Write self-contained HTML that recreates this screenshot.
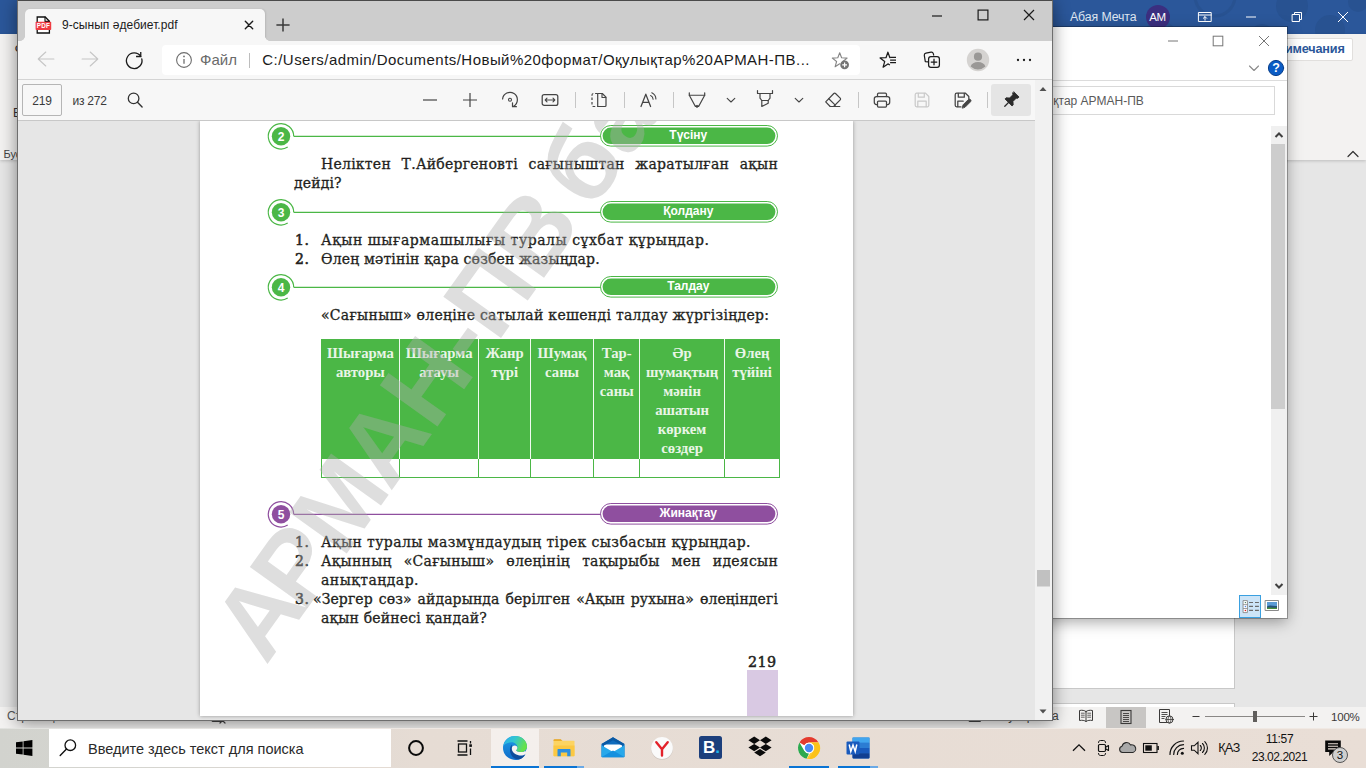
<!DOCTYPE html>
<html lang="kk">
<head>
<meta charset="utf-8">
<title>9-сынып әдебиет.pdf</title>
<style>
*{box-sizing:border-box;margin:0;padding:0}
html,body{width:1366px;height:768px;overflow:hidden;background:#e6e6e6;font-family:"Liberation Sans",sans-serif;}
.abs{position:absolute}
#screen{position:relative;width:1366px;height:768px;overflow:hidden}

/* ---------- generic icon/text helpers ---------- */
svg.i{position:absolute;overflow:visible;fill:none;stroke-linecap:round;stroke-linejoin:round}
.tx{position:absolute;white-space:nowrap}
/* ---------- Word (background window) ---------- */
#word{left:0;top:0;width:1366px;height:728px;background:#e6e6e6}
#word .title{left:0;top:0;width:1366px;height:34px;background:#2b579a}
#word .ribbon{left:0;top:34px;width:1366px;height:126px;background:#f3f2f1;box-shadow:0 1px 3px rgba(0,0,0,.18)}
#word .status{left:0;top:706.5px;width:1366px;height:21.5px;background:#f3f2f1}
/* ---------- File dialog ---------- */
#dlg{left:900px;top:27px;width:387px;height:591px;background:#fff;box-shadow:0 0 0 1px rgba(0,0,0,.28),0 4px 14px rgba(0,0,0,.35)}
/* ---------- Edge ---------- */
#edge{left:17px;top:0;width:1036px;height:721px;background:#e6e6e6;box-shadow:0 2px 16px rgba(0,0,0,.45)}
#edge .tabbar{left:-1px;top:0;width:1036px;height:41px;background:#cdcdcd}
#edge .tab{left:7px;top:9px;width:240px;height:32px;background:#f7f7f7;border-radius:5px 5px 0 0;box-shadow:1px 0 2px rgba(0,0,0,.10)}
#edge .tab:before,#edge .tab:after{content:"";position:absolute;bottom:0;width:5px;height:5px}
#edge .tab:before{left:-5px;background:radial-gradient(circle at 0 0,transparent 4.6px,#f7f7f7 5.2px)}
#edge .tab:after{right:-5px;background:radial-gradient(circle at 100% 0,transparent 4.6px,#f7f7f7 5.2px)}
#edge .nav{left:-1px;top:41px;width:1036px;height:39px;background:#f7f7f7;border-bottom:1px solid #d4d4d4}
#edge .addr{left:145px;top:4px;width:698px;height:30px;background:#fff;border-radius:4px}
#edge .pdfbar{left:-1px;top:80px;width:1018px;height:41px;background:#f7f7f7;border-bottom:1px solid #c8c8c8}
#edge .vscroll{left:1017px;top:80px;width:17px;height:641px;background:#f1f1f1}
#edge .view{left:-1px;top:121px;width:1018px;height:600px;background:#e6e6e6;overflow:hidden}
#page{left:183px;top:0;width:653px;height:595px;background:#fff;box-shadow:0 0 4px rgba(0,0,0,.35)}


/* ---------- Edge chrome details ---------- */
#edge svg.ic{position:absolute;overflow:visible;fill:none;stroke:#1b1b1b;stroke-width:1.25;stroke-linecap:round;stroke-linejoin:round}
#edge .t{position:absolute;white-space:nowrap;color:#1b1b1b}
#edge .sep{position:absolute;width:1px;background:#c6c6c6}
#edgein{left:1px;top:0;width:1035px;height:721px}
#edge .frame{left:0;top:0;width:1036px;height:721px;border:1px solid #6e6e6e;border-top-color:#4a4a4a;pointer-events:none}
/* ---------- PDF page content ---------- */
#page{font-family:"DejaVu Serif","Liberation Serif",serif;font-size:14px;color:#231f20;letter-spacing:.5px}
#page .ln{position:absolute;-webkit-text-stroke:.3px #231f20;white-space:nowrap;line-height:19px;height:19px}
#page .j{letter-spacing:.25px;text-align:justify;text-align-last:justify;white-space:normal}
#page svg.hd{position:absolute;left:0;width:653px;height:30px;overflow:visible}
#page svg.hd text{font-family:"Liberation Sans",sans-serif;font-weight:bold;fill:#fff;letter-spacing:0}
#wm{position:absolute;left:0;top:0;width:653px;height:595px;overflow:hidden;pointer-events:none}
#tbl{position:absolute;left:121px;top:218px;width:459px;height:139px}
#tbl .bg{position:absolute;left:0;top:0;width:458.8px;height:120.4px;background:#4bb746}
#tbl .h{position:absolute;top:0;height:120px;font-family:"Liberation Serif",serif;font-size:14.7px;color:#e9f5e6;font-weight:bold;text-align:center;line-height:19px;padding-top:5px;white-space:nowrap;letter-spacing:0}
#tbl .vs{position:absolute;top:0;width:1px;height:120px;background:rgba(255,255,255,.92)}
#tbl .vg{position:absolute;top:120px;width:1px;height:18.5px;background:#4bb746}
#tbl .hg{position:absolute;left:0;top:137.8px;width:459px;height:1px;background:#4bb746}
/* ---------- Taskbar ---------- */
#taskbar{left:0;top:728px;width:1366px;height:40px;background:linear-gradient(90deg,#d2d3ce 0,#d6d5d0 180px,#e6dcd4 420px,#e9ded6 100%)}
#taskbar .search{left:49px;top:1px;width:342px;height:38px;background:#fff}
</style>
</head>
<body>
<div id="screen">

<!-- WORD -->
<div id="word" class="abs">
<div class="title abs">
<svg class="i" style="left:1040px;top:0" width="326" height="34" viewBox="0 0 326 34"><g fill="#285291" stroke="none"><circle cx="252" cy="6" r="16"/><circle cx="290" cy="30" r="15"/><circle cx="222" cy="36" r="12"/><circle cx="318" cy="2" r="10"/></g><g fill="none" stroke="#285291" stroke-width="3"><circle cx="175" cy="-4" r="20"/><circle cx="120" cy="38" r="16"/></g></svg>
<div class="tx" style="left:1070px;top:8px;font-size:12.300px;line-height:18px;color:#dfe6f1;letter-spacing:-.1px">Абая Мечта</div>
<div style="position:absolute;left:1145.500px;top:5.300px;width:24px;height:24px;border-radius:12px;background:#3b2f80"></div>
<div class="tx" style="left:1145.500px;top:9.300px;width:24px;text-align:center;font-size:11.500px;line-height:16px;color:#fff;letter-spacing:-.3px">АМ</div>
<svg class="i" style="left:1194.5px;top:6.7px" width="20" height="20" viewBox="0 0 20 20"><rect x="3.800" y="5.500" width="12.400" height="9" stroke="#fff" stroke-width="1"/><path d="M3.800 8h12.400M10 13.200V9.800M8.300 11.300L10 9.600l1.700 1.700" stroke="#fff" stroke-width="1"/></svg>
<svg class="i" style="left:1241.2px;top:6.5px" width="20" height="20" viewBox="0 0 20 20"><path d="M5 10h10" stroke="#fff" stroke-width="1" stroke-linecap="butt"/></svg>
<svg class="i" style="left:1287.0px;top:6.5px" width="20" height="20" viewBox="0 0 20 20"><path d="M5.500 7.500h7v7h-7zM7.500 7.500v-2h7v7h-2" stroke="#fff" stroke-width="1" stroke-linejoin="miter"/></svg>
<svg class="i" style="left:1333.3px;top:6.5px" width="20" height="20" viewBox="0 0 20 20"><path d="M5 5l10 10M15 5L5 15" stroke="#fff" stroke-width="1" stroke-linecap="butt"/></svg>
</div>
<div class="ribbon abs">
<div style="position:absolute;left:1250px;top:4px;width:103px;height:23px;background:#fff;border:1px solid #e1dfdd;border-radius:2px"></div>
<div class="tx" style="left:1268.500px;top:7px;font-size:12.700px;line-height:17px;color:#2b579a;font-weight:bold;letter-spacing:-.2px">Примечания</div>
<svg class="i" style="left:1345.500px;top:114.500px" width="14" height="10" viewBox="0 0 14 10"><path d="M2 7.500l5-5 5 5" stroke="#333" stroke-width="1.200"/></svg>
<div class="tx" style="left:3.500px;top:111.500px;font-size:11px;line-height:16px;color:#444">Буфер обмена</div>
<div class="tx" style="left:14.500px;top:6px;font-size:14px;line-height:18px;color:#333">Ф</div>
<div class="tx" style="left:13px;top:70.500px;font-size:12px;line-height:16px;color:#333">В</div>
</div>
<div style="position:absolute;left:900px;top:560px;width:333.800px;height:128px;background:#fff;box-shadow:0 0 0 1px #c8c8c8"></div>
<div style="position:absolute;left:900px;top:703.700px;width:333.800px;height:10px;background:#fff;box-shadow:0 0 0 1px #c8c8c8"></div>
<div class="status abs">
<div class="tx" style="left:7px;top:1.500px;font-size:12px;line-height:16px;color:#555">Страница 1 из 3 &nbsp;&nbsp;&nbsp;&nbsp; Число слов: 778 &nbsp;&nbsp;&nbsp;&nbsp;&nbsp;&nbsp;&nbsp;&nbsp;&nbsp;&nbsp;&nbsp;&nbsp;&nbsp;&nbsp; казахский</div>
<svg class="i" style="left:210px;top:2.500px" width="18" height="16" viewBox="0 0 18 16"><rect x="2.500" y="2.500" width="9" height="10" stroke="#444" stroke-width="1"/><path d="M10 9l5 5M15 9l-5 5" stroke="#444" stroke-width="1.200"/></svg>
<div class="tx" style="left:987px;top:1.500px;font-size:12px;line-height:16px;color:#444">Фокусировка</div>
<svg class="i" style="left:968px;top:3px" width="14" height="14" viewBox="0 0 14 14"><rect x="1.500" y="2.500" width="11" height="9" stroke="#444" stroke-width="1"/></svg>
<div style="position:absolute;left:1106px;top:0;width:40px;height:21px;background:#c8c6c4"></div>
<svg class="i" style="left:1076.500px;top:.800px" width="18" height="18" viewBox="0 0 18 18"><path d="M9 4.500C7.500 3.300 5 3 2.500 3.500v10c2.500-.5 5-.2 6.500 1 1.500-1.200 4-1.500 6.500-1V3.500C13 3 10.500 3.300 9 4.500zM9 4.500v10" stroke="#3b3a39" stroke-width="1"/><path d="M4.300 6.200h3M4.300 8.200h3M4.300 10.200h3M10.700 6.200h3M10.700 8.200h3M10.700 10.200h3" stroke="#3b3a39" stroke-width=".8"/></svg>
<svg class="i" style="left:1116.600px;top:1px" width="18" height="18" viewBox="0 0 18 18"><rect x="4" y="2.500" width="10" height="13" stroke="#3b3a39" stroke-width="1.100" stroke-linejoin="miter"/><path d="M6 5.500h6M6 7.500h6M6 9.500h6M6 11.500h6M6 13.500h6" stroke="#3b3a39" stroke-width=".9" stroke-linecap="butt"/></svg>
<svg class="i" style="left:1156px;top:.800px" width="20" height="18" viewBox="0 0 20 18"><path d="M12.500 15.500H3.500v-13h10v6" stroke="#3b3a39" stroke-width="1" stroke-linejoin="miter"/><path d="M5.500 5.500h6M5.500 7.500h6M5.500 9.500h4M5.500 11.500h3" stroke="#3b3a39" stroke-width=".9" stroke-linecap="butt"/><circle cx="13.500" cy="12.500" r="3.600" fill="#f3f2f1" stroke="#3b3a39" stroke-width="1"/><path d="M9.900 12.500h7.200M13.500 8.900c-2 2-2 5.200 0 7.200M13.500 8.900c2 2 2 5.200 0 7.200" stroke="#3b3a39" stroke-width=".8"/></svg>
<svg class="i" style="left:1190px;top:-.500px" width="130" height="21" viewBox="0 0 130 21"><path d="M2.500 10.500h7M119.500 10.500h8M123.500 6.500v8" stroke="#3b3a39" stroke-width="1" stroke-linecap="butt"/><path d="M15 10.500h100" stroke="#8a8886" stroke-width="1" stroke-linecap="butt"/><rect x="63" y="5" width="4" height="11" fill="#605e5c" stroke="none"/></svg>
<div class="tx" style="left:1331px;top:2.500px;font-size:11.500px;line-height:16px;color:#3b3a39;letter-spacing:-.2px">100%</div>
</div>
</div>

<!-- DIALOG -->
<div id="dlg" class="abs">
<svg class="i" style="left:262.7px;top:4.2px" width="20" height="20" viewBox="0 0 20 20"><path d="M5 10h10" stroke="#767676" stroke-width="1" stroke-linecap="butt"/></svg>
<svg class="i" style="left:308.2px;top:4.0px" width="20" height="20" viewBox="0 0 20 20"><rect x="5.200" y="5.200" width="9.600" height="9.600" stroke="#767676" stroke-width="1" stroke-linejoin="miter"/></svg>
<svg class="i" style="left:354.0px;top:4.0px" width="20" height="20" viewBox="0 0 20 20"><path d="M5 5l10 10M15 5L5 15" stroke="#767676" stroke-width="1" stroke-linecap="butt"/></svg>
<svg class="i" style="left:344.0px;top:31.3px" width="20" height="20" viewBox="0 0 20 20"><path d="M5.500 8l4.500 4.500L14.500 8" stroke="#8a8a8a" stroke-width="1.100"/></svg>
<svg class="i" style="left:365.8px;top:31.0px" width="20" height="20" viewBox="0 0 20 20"><circle cx="10" cy="10" r="7.600" fill="#0b5cc5" stroke="#0a3f8a" stroke-width="1"/><text x="10" y="14.300" font-family="Liberation Sans, sans-serif" font-weight="bold" font-size="12.500" fill="#fff" stroke="none" text-anchor="middle">?</text></svg>
<div style="position:absolute;left:0;top:53px;width:387px;height:1px;background:#dcdcdc"></div>
<div style="position:absolute;left:100px;top:58.700px;width:275px;height:29.800px;border:1px solid #d9d9d9;background:#fff"></div>
<div class="tx" style="left:153.300px;top:65.500px;font-size:12px;line-height:17px;color:#5a5a5a;letter-spacing:0">қтар АРМАН-ПВ</div>
<div style="position:absolute;left:371px;top:99px;width:16px;height:469px;background:#f0f0f0"></div>
<div style="position:absolute;left:371px;top:116.500px;width:14px;height:265px;background:#cdcdcd"></div>
<svg class="i" style="left:371px;top:99px" width="16" height="469" viewBox="0 0 16 469"><path d="M4.500 11l3.500-3.500L11.500 11M4.500 458l3.500 3.500 3.500-3.500" stroke="#404040" stroke-width="2" stroke-linecap="butt" stroke-linejoin="miter"/></svg>
<div style="position:absolute;left:339px;top:568px;width:22px;height:22.500px;background:#cce4f7;border:1px solid #3aa0e0"></div>
<svg class="i" style="left:341px;top:572px" width="18" height="15" viewBox="0 0 18 15"><rect x="2.400" y="1.600" width="4" height="12" fill="#fff" stroke="#8a8a8a" stroke-width=".9"/><path d="M2.400 5.600h4M2.400 9.500h4" stroke="#8a8a8a" stroke-width=".8"/><circle cx="4.400" cy="3.600" r=".7" fill="#3c7a5a" stroke="none"/><circle cx="4.400" cy="7.500" r=".7" fill="#4a86e8" stroke="none"/><circle cx="4.400" cy="11.500" r=".8" fill="#e02020" stroke="none"/><path d="M8.100 3.500h3.900M14 3.500h3.900M8.100 7.400h3.900M14 7.400h3.900M8.100 11.400h3.900M14 11.400h3.900" stroke="#6a6a6a" stroke-width="1.100" stroke-linecap="butt"/></svg>
<svg class="i" style="left:365px;top:573px" width="14" height="11" viewBox="0 0 14 11"><rect x=".500" y=".500" width="13" height="10" fill="#fff" stroke="#8a8a8a" stroke-width="1"/><rect x="2" y="2" width="10" height="7" fill="#5b9bd5" stroke="none"/><path d="M2 6.500c3-2 6 0 10-.5V9H2z" fill="#27527a" stroke="none"/><path d="M2 7.800c3-1 6 .3 10 0V9H2z" fill="#4a8f3c" stroke="none"/></svg>
</div>

<!-- EDGE -->
<div id="edge" class="abs">
<div id="edgein" class="abs">
  <div class="tabbar abs"></div>
  <div class="tab abs"></div>
  <div class="nav abs"><div class="addr abs"></div></div>
  <div class="pdfbar abs"></div>
  <div class="view abs">
    <div id="page" class="abs">
<svg class="hd" style="top:0px" viewBox="0 0 653 30">
<path d="M93.7 15.3A12.7 12.7 0 1 0 87.7 26.1" fill="none" stroke="#4bb746" stroke-width="1.2"/>
<circle cx="81" cy="15.3" r="9.2" fill="#4bb746"/>
<text x="81" y="19.5" font-size="12" text-anchor="middle">2</text>
<path d="M93.7 15.3H401" stroke="#4bb746" stroke-width="1.3" fill="none"/>
<rect x="400.5" y="4.5" width="177" height="20.6" rx="10.3" fill="#fff" stroke="#4bb746" stroke-width="1"/>
<rect x="402.6" y="6.5" width="172.8" height="16.6" rx="8.3" fill="#4bb746"/>
<text x="488.3" y="17.9" font-size="12" text-anchor="middle">Түсіну</text>
</svg>
<div class="ln j" style="left:121px;top:34px;width:457px">Неліктен Т.Айбергеновті сағыныштан жаратылған ақын</div>
<div class="ln" style="left:94px;top:53px;letter-spacing:0.13px">дейді?</div>
<svg class="hd" style="top:75.5px" viewBox="0 0 653 30">
<path d="M93.7 15.3A12.7 12.7 0 1 0 87.7 26.1" fill="none" stroke="#4bb746" stroke-width="1.2"/>
<circle cx="81" cy="15.3" r="9.2" fill="#4bb746"/>
<text x="81" y="19.5" font-size="12" text-anchor="middle">3</text>
<path d="M93.7 15.3H401" stroke="#4bb746" stroke-width="1.3" fill="none"/>
<rect x="400.5" y="4.5" width="177" height="20.6" rx="10.3" fill="#fff" stroke="#4bb746" stroke-width="1"/>
<rect x="402.6" y="6.5" width="172.8" height="16.6" rx="8.3" fill="#4bb746"/>
<text x="488.3" y="17.9" font-size="12" text-anchor="middle">Қолдану</text>
</svg>
<div class="ln" style="left:95px;top:110px;-webkit-text-stroke:.55px #231f20">1.</div><div class="ln" style="left:121px;top:110px;letter-spacing:0.55px">Ақын шығармашылығы туралы сұхбат құрыңдар.</div>
<div class="ln" style="left:95px;top:129px;-webkit-text-stroke:.55px #231f20">2.</div><div class="ln" style="left:121px;top:129px;letter-spacing:0.16px">Өлең мәтінін қара сөзбен жазыңдар.</div>
<svg class="hd" style="top:151px" viewBox="0 0 653 30">
<path d="M93.7 15.3A12.7 12.7 0 1 0 87.7 26.1" fill="none" stroke="#4bb746" stroke-width="1.2"/>
<circle cx="81" cy="15.3" r="9.2" fill="#4bb746"/>
<text x="81" y="19.5" font-size="12" text-anchor="middle">4</text>
<path d="M93.7 15.3H401" stroke="#4bb746" stroke-width="1.3" fill="none"/>
<rect x="400.5" y="4.5" width="177" height="20.6" rx="10.3" fill="#fff" stroke="#4bb746" stroke-width="1"/>
<rect x="402.6" y="6.5" width="172.8" height="16.6" rx="8.3" fill="#4bb746"/>
<text x="488.3" y="17.9" font-size="12" text-anchor="middle">Талдау</text>
</svg>
<div class="ln" style="left:121px;top:185px;letter-spacing:0.29px">«Сағыныш» өлеңіне сатылай кешенді талдау жүргізіңдер:</div>
<div id="tbl">
<div class="bg"></div>
<div class="h" style="left:0.2px;width:78.4px">Шығарма<br>авторы</div>
<div class="h" style="left:78.6px;width:79.0px">Шығарма<br>атауы</div><div class="vs" style="left:78.1px"></div>
<div class="h" style="left:157.6px;width:52.0px">Жанр<br>түрі</div><div class="vs" style="left:157.1px"></div>
<div class="h" style="left:209.6px;width:63.0px">Шумақ<br>саны</div><div class="vs" style="left:209.1px"></div>
<div class="h" style="left:272.6px;width:46.1px">Тар-<br>мақ<br>саны</div><div class="vs" style="left:272.1px"></div>
<div class="h" style="left:318.7px;width:84.8px">Әр<br>шумақтың<br>мәнін<br>ашатын<br>көркем<br>сөздер</div><div class="vs" style="left:318.2px"></div>
<div class="h" style="left:403.5px;width:55.2px">Өлең<br>түйіні</div><div class="vs" style="left:403.0px"></div>
<div class="vg" style="left:-0.3px"></div><div class="vg" style="left:78.1px"></div><div class="vg" style="left:157.1px"></div><div class="vg" style="left:209.1px"></div><div class="vg" style="left:272.1px"></div><div class="vg" style="left:318.2px"></div><div class="vg" style="left:403.0px"></div><div class="vg" style="left:458.2px"></div>
<div class="hg"></div>
</div>
<svg class="hd" style="top:378px" viewBox="0 0 653 30">
<path d="M93.7 15.3A12.7 12.7 0 1 0 87.7 26.1" fill="none" stroke="#8f4f9f" stroke-width="1.2"/>
<circle cx="81" cy="15.3" r="9.2" fill="#8f4f9f"/>
<text x="81" y="19.5" font-size="12" text-anchor="middle">5</text>
<path d="M93.7 15.3H401" stroke="#8f4f9f" stroke-width="1.3" fill="none"/>
<rect x="400.5" y="4.5" width="177" height="20.6" rx="10.3" fill="#fff" stroke="#8f4f9f" stroke-width="1"/>
<rect x="402.6" y="6.5" width="172.8" height="16.6" rx="8.3" fill="#8f4f9f"/>
<text x="488.3" y="17.9" font-size="12" text-anchor="middle">Жинақтау</text>
</svg>
<div class="ln" style="left:95px;top:412px;-webkit-text-stroke:.55px #231f20">1.</div><div class="ln" style="left:121px;top:412px;letter-spacing:0.41px">Ақын туралы мазмұндаудың тірек сызбасын құрыңдар.</div>
<div class="ln" style="left:95px;top:431px;-webkit-text-stroke:.55px #231f20">2.</div><div class="ln j" style="left:121px;top:431px;width:457px">Ақынның «Сағыныш» өлеңінің тақырыбы мен идеясын</div>
<div class="ln" style="left:121px;top:450px;letter-spacing:0.48px">анықтаңдар.</div>
<div class="ln" style="left:95px;top:469px;-webkit-text-stroke:.55px #231f20">3.</div><div class="ln j" style="left:113px;top:469px;width:465px;letter-spacing:.1px">«Зергер сөз» айдарында берілген «Ақын рухына» өлеңіндегі</div>
<div class="ln" style="left:121px;top:488px;letter-spacing:0.19px">ақын бейнесі қандай?</div>
<div class="ln" style="left:516px;top:531.5px;width:60.5px;text-align:right;font-size:14.3px;letter-spacing:.4px;-webkit-text-stroke:.5px #231f20">219</div>
<div style="position:absolute;left:547px;top:549px;width:31px;height:46px;background:#d9c9e3"></div>
<svg id="wm" viewBox="0 0 653 595"><text transform="translate(66 545) rotate(-54.4)" font-family="Liberation Sans, sans-serif" font-weight="bold" font-size="103" fill="rgba(172,172,172,.4)" letter-spacing="0">А<tspan dx="-10">РМ</tspan><tspan dx="-4">АН-ПВ</tspan><tspan dx="-15"> баспасы</tspan></text></svg>
</div>
  </div>
  <div class="vscroll abs"></div>
<svg class="ic" style="left:1017px;top:80px" width="17" height="640" viewBox="0 0 17 640"><path d="M4.500 11L8 7l3.500 4z" fill="#505050" stroke="none"/><path d="M4.500 629.500L8 633.500l3.500-4z" fill="#505050" stroke="none"/><rect x="2" y="490" width="13" height="16.500" fill="#c1c1c1" stroke="none"/></svg>
<svg class="ic" style="left:17px;top:16px" width="17" height="18" viewBox="0 0 17 18"><path d="M2.2 1h8l4.2 4.2V17H2.2z" fill="#fff" stroke="#111" stroke-width="1.3" stroke-linejoin="miter"/><path d="M10 1v4.4h4.4" stroke="#111" stroke-width="1.1"/><rect x="0.6" y="5.7" width="15.6" height="8.3" rx="0.8" fill="#ef3b42" stroke="none"/><text x="8.4" y="12.3" font-family="Liberation Sans, sans-serif" font-weight="bold" font-size="6.3" fill="#fff" stroke="none" text-anchor="middle" letter-spacing=".2">PDF</text></svg>
<div class="t" style="left:44px;top:17px;font-size:12px;line-height:16px;letter-spacing:.05px">9-сынып әдебиет.pdf</div>
<svg class="ic" style="left:220.6px;top:15.1px" width="20" height="20" viewBox="0 0 20 20"><path d="M6.300 6.300l7.400 7.400M13.700 6.300l-7.400 7.400" stroke-width="1.400"/></svg>
<svg class="ic" style="left:255.0px;top:15.0px" width="20" height="20" viewBox="0 0 20 20"><path d="M3.400 10h13.200M10 3.400v13.200" stroke="#3a3a3a" stroke-width="1.500" stroke-linecap="butt"/></svg>
<svg class="ic" style="left:908.8px;top:5.5px" width="20" height="20" viewBox="0 0 20 20"><path d="M5 10h10" stroke-width="1.2" stroke-linecap="butt"/></svg>
<svg class="ic" style="left:954.9px;top:5.0px" width="20" height="20" viewBox="0 0 20 20"><rect x="5.1" y="5.1" width="9.8" height="9.8" stroke-width="1.2" stroke-linejoin="miter"/></svg>
<svg class="ic" style="left:1001.0px;top:5.0px" width="20" height="20" viewBox="0 0 20 20"><path d="M5 5l10 10M15 5L5 15" stroke-width="1.2" stroke-linecap="butt"/></svg>
<svg class="ic" style="left:18.0px;top:49.4px" width="20" height="20" viewBox="0 0 20 20"><path d="M17.9 10H2.2M9.8 3L2.2 10l7.6 7" stroke="#c6c6c6" stroke-width="1.100"/></svg>
<svg class="ic" style="left:62.0px;top:49.4px" width="20" height="20" viewBox="0 0 20 20"><path d="M2.1 10h15.7M10.2 3l7.6 7-7.6 7" stroke="#c6c6c6" stroke-width="1.1"/></svg>
<svg class="ic" style="left:106.0px;top:49.8px" width="20" height="20" viewBox="0 0 20 20"><path d="M17.800 8.900A7.800 7.800 0 1 1 16.700 6.400" stroke-width="1.300"/><path d="M16.750 2v4.500h-4.700" stroke-width="1.300" stroke-linecap="butt" stroke-linejoin="miter"/></svg>
<svg class="ic" style="left:155.9px;top:50.0px" width="20" height="20" viewBox="0 0 20 20"><circle cx="10" cy="10" r="7.4" stroke="#6e6e6e" stroke-width="1.1"/><path d="M10 9v4.8" stroke="#6e6e6e" stroke-width="1.3" stroke-linecap="butt"/><circle cx="10" cy="6.4" r=".9" fill="#6e6e6e" stroke="none"/></svg>
<div class="t" style="left:182px;top:50px;font-size:15px;line-height:20px;color:#6b6b6b">Файл</div>
<div class="sep" style="left:231px;top:53px;height:15px;background:#bdbdbd"></div>
<div class="t" style="left:244.3px;top:50px;font-size:15px;line-height:20px;letter-spacing:.46px">C:/Users/admin/Documents/Новый%20формат/Оқулықтар%20АРМАН-ПВ...</div>
<svg class="ic" style="left:812.2px;top:50.0px" width="20" height="20" viewBox="0 0 20 20"><path d="M12.8 11.5L17.1 8.1L11.6 7.8L9.7 2.7L7.8 7.8L2.3 8.1L6.6 11.5L5.1 16.8L9.7 13.8" stroke="#858585" stroke-width="1.1"/><circle cx="14.600" cy="14.800" r="4.400" fill="#757575" stroke="none"/><path d="M14.600 12.400v4.800M12.200 14.800h4.800" stroke="#fff" stroke-width="1.200" stroke-linecap="butt"/></svg>
<svg class="ic" style="left:860.0px;top:50.0px" width="20" height="20" viewBox="0 0 20 20"><path d="M11.9 7.7L9.9 2.2L8.0 7.7L2.1 7.9L6.7 11.6L5.1 17.2L9.9 13.9l1.6 .9" stroke-width="1.25"/><path d="M12.100 7.400h5.900M12.100 10.100h5.900M12.100 12.700h5.900" stroke-width="1.200" stroke-linecap="butt"/></svg>
<svg class="ic" style="left:904.4px;top:50.0px" width="20" height="20" viewBox="0 0 20 20"><path d="M6.3 11.8l-3-.2-1-6.3a2 2 0 0 1 1.6-2.2l5.2-.9a2 2 0 0 1 2.2 1.4l.4 1.6" stroke-width="1.2"/><rect x="6.6" y="6.6" width="10.8" height="10.8" rx="2.3" stroke-width="1.25"/><path d="M12 9.2v5.6M9.2 12h5.6" stroke-width="1.25"/></svg>
<svg class="ic" style="left:947.8px;top:48.0px" width="24" height="24" viewBox="0 0 24 24"><circle cx="12" cy="12" r="11.2" fill="#d5d3d1" stroke="none"/><circle cx="12" cy="8.7" r="4.1" fill="#9a9896" stroke="none"/><path d="M4.6 18.6c.9-3.2 3.8-4.7 7.4-4.7s6.500 1.500 7.400 4.700a11 11 0 0 1-14.800 0z" fill="#9a9896" stroke="none"/></svg>
<svg class="ic" style="left:995.8px;top:50.0px" width="20" height="20" viewBox="0 0 20 20"><circle cx="4" cy="10" r="1.15" fill="#1b1b1b" stroke="none"/><circle cx="10" cy="10" r="1.15" fill="#1b1b1b" stroke="none"/><circle cx="16" cy="10" r="1.15" fill="#1b1b1b" stroke="none"/></svg>
<div style="position:absolute;left:4px;top:84px;width:40px;height:32px;border:1px solid #b5b5b5;border-radius:2px;background:#f7f7f7"></div>
<div class="t" style="left:4px;top:93px;width:40px;text-align:center;font-size:12px;line-height:16px;color:#3a3a3a;letter-spacing:-.2px">219</div>
<div class="t" style="left:54.5px;top:93px;font-size:12px;line-height:16px;color:#3a3a3a;letter-spacing:-.25px">из 272</div>
<svg class="ic" style="left:106.5px;top:90.0px" width="20" height="20" viewBox="0 0 20 20"><circle cx="8.6" cy="8.4" r="5.3" stroke="#333" stroke-width="1.3"/><path d="M12.5 12.3l4.6 4.6" stroke="#333" stroke-width="1.4"/></svg>
<svg class="ic" style="left:402.0px;top:90.0px" width="20" height="20" viewBox="0 0 20 20"><path d="M3 10h14" stroke="#444" stroke-width="1.2" stroke-linecap="butt"/></svg>
<svg class="ic" style="left:441.8px;top:90.0px" width="20" height="20" viewBox="0 0 20 20"><path d="M3 10h14M10 3v14" stroke="#444" stroke-width="1.2" stroke-linecap="butt"/></svg>
<svg class="ic" style="left:482.0px;top:90.0px" width="20" height="20" viewBox="0 0 20 20"><path d="M2.6 9.000A7.400 7.400 0 1 1 13.6 16.2" stroke="#444" stroke-width="1.2"/><path d="M16.400 16.700h-3.900v-3.900" stroke="#444" stroke-width="1.2"/><circle cx="10" cy="9.700" r="1.500" stroke="#444" stroke-width="1.1"/></svg>
<svg class="ic" style="left:522.4px;top:90.0px" width="20" height="20" viewBox="0 0 20 20"><rect x="2.2" y="4.6" width="15.6" height="10.8" rx="2" stroke="#444" stroke-width="1.25"/><path d="M5.200 10h9.600M7 8.200L5.200 10 7 11.800M13 8.200l1.800 1.800-1.800 1.800" stroke="#444" stroke-width="1.1"/></svg>
<div class="sep" style="left:556.500px;top:92px;height:16px"></div>
<svg class="ic" style="left:570.6px;top:90.0px" width="20" height="20" viewBox="0 0 20 20"><path d="M8.700 3.500h4.600l3.700 3.700v8.300a1 1 0 0 1-1 1H8.700z" stroke="#444" stroke-width="1.2"/><path d="M13 3.700v3.800h3.800" stroke="#444" stroke-width="1.100"/><path d="M8.700 3.500H4.500a1.500 1.500 0 0 0-1.500 1.500v10a1.500 1.500 0 0 0 1.500 1.500h4.200" stroke="#444" stroke-width="1.200" stroke-dasharray="2.600 1.800" stroke-linecap="butt"/></svg>
<div class="sep" style="left:605.500px;top:92px;height:16px"></div>
<svg class="ic" style="left:620.3px;top:90.0px" width="20" height="20" viewBox="0 0 20 20"><path d="M3 16.500L7.800 4.200l4.800 12.300M4.700 12.300h6.200" stroke="#444" stroke-width="1.250"/><path d="M12.600 5.600a4.200 4.200 0 0 1 2.500 3.700M13.800 2.800a7 7 0 0 1 4.100 6.200" stroke="#444" stroke-width="1.100"/></svg>
<div class="sep" style="left:654.500px;top:92px;height:16px"></div>
<svg class="ic" style="left:669.1px;top:90.0px" width="20" height="20" viewBox="0 0 20 20"><path d="M2.300 2.800v2.400l6.100 11.300h3.200l6.100-11.300V2.800" stroke="#444" stroke-width="1.200"/><path d="M2.300 5.200h15.400" stroke="#444" stroke-width="1.100"/><path d="M8.900 15.800l1.100 2 1.100-2z" fill="#444" stroke="#444" stroke-width=".8"/></svg>
<svg class="ic" style="left:702.9px;top:90.0px" width="20" height="20" viewBox="0 0 20 20"><path d="M6.200 8.400L10 12l3.800-3.600" stroke="#444" stroke-width="1.100"/></svg>
<svg class="ic" style="left:736.9px;top:88.5px" width="20" height="20" viewBox="0 0 20 20"><path d="M2.500 1.500v3h15v-3M5 4.500v4.700l1.800 2.300v6l6.400-3.200v-2.800L15 9.200V4.500" stroke="#444" stroke-width="1.200"/><path d="M6.800 11.500h6.400" stroke="#444" stroke-width="1.100"/></svg>
<svg class="ic" style="left:771.1px;top:90.0px" width="20" height="20" viewBox="0 0 20 20"><path d="M6.200 8.400L10 12l3.800-3.600" stroke="#444" stroke-width="1.100"/></svg>
<svg class="ic" style="left:804.9px;top:90.0px" width="20" height="20" viewBox="0 0 20 20"><path d="M2.700 11.800l8.100-8.300a1.200 1.200 0 0 1 1.700 0l4.700 4.600a1.200 1.200 0 0 1 0 1.700l-6.600 6.700H7.200z" stroke="#444" stroke-width="1.200"/><path d="M5.800 8.700l6.500 6.400M7.200 16.500h9.600" stroke="#444" stroke-width="1.200"/></svg>
<div class="sep" style="left:839.500px;top:92px;height:16px"></div>
<svg class="ic" style="left:854.2px;top:90.0px" width="20" height="20" viewBox="0 0 20 20"><path d="M5.500 6.500V4.200a1.200 1.200 0 0 1 1.200-1.200h6.600a1.200 1.200 0 0 1 1.200 1.200v2.300" stroke="#444" stroke-width="1.250"/><rect x="2.300" y="6.500" width="15.400" height="8" rx="2.200" stroke="#444" stroke-width="1.250"/><rect x="5.500" y="11" width="9" height="6" rx="1" fill="#f7f7f7" stroke="#444" stroke-width="1.250"/></svg>
<svg class="ic" style="left:894.0px;top:90.0px" width="20" height="20" viewBox="0 0 20 20"><path d="M3.200 4.700a1.500 1.500 0 0 1 1.500-1.500h8.800l3.300 3.300v8.800a1.500 1.500 0 0 1-1.500 1.500H4.700a1.500 1.500 0 0 1-1.500-1.500z" stroke="#c9c9c9" stroke-width="1.200"/><path d="M6.300 3.400v3.800h6v-3.800M5.800 16.600v-5.400h8.400v5.400" stroke="#c9c9c9" stroke-width="1.200"/></svg>
<svg class="ic" style="left:934.0px;top:90.0px" width="20" height="20" viewBox="0 0 20 20"><path d="M9 16.800H4.700a1.500 1.500 0 0 1-1.500-1.500V4.700a1.500 1.500 0 0 1 1.500-1.500h8.800l3.300 3.300v2.300" stroke="#444" stroke-width="1.250"/><path d="M6.300 3.400v3.800h6v-3.800M5.800 16.600v-5.400h5.400" stroke="#444" stroke-width="1.250"/><path d="M10.300 17.800l.7-2.900 5.300-5.300a1.550 1.550 0 0 1 2.200 2.200l-5.300 5.300z" fill="#444" stroke="#444" stroke-width=".9"/></svg>
<div class="sep" style="left:968.500px;top:92px;height:16px"></div>
<div style="position:absolute;left:973px;top:84px;width:40px;height:32px;background:#e5e5e5;border-radius:3px"></div>
<svg class="ic" style="left:983.0px;top:90.0px" width="20" height="20" viewBox="0 0 20 20"><g transform="rotate(45 10 10)"><path d="M6.400 2.200h7.200v1.800l-1.200 1v4.600l2.600 2.300v1.600H5v-1.600l2.600-2.300V5L6.400 4z" fill="#2b2b2b" stroke="#2b2b2b" stroke-width=".8"/><path d="M10 13.500v5.300" stroke="#2b2b2b" stroke-width="1.300"/></g></svg>
</div><div class="frame abs"></div>
</div>

<!-- TASKBAR -->
<div id="taskbar" class="abs">
<div style="position:absolute;left:0;top:0;width:1366px;height:1px;background:rgba(255,255,255,.35)"></div>
<svg class="i" style="left:15.800px;top:12px" width="16.400" height="16" viewBox="0 0 16.400 16"><path d="M0 2.300L6.700 1.400V7.600H0zM7.500 1.300L16.400 0V7.600H7.500zM0 8.400H6.700V14.600L0 13.700zM7.500 8.400H16.400V16L7.500 14.700z" fill="#000" stroke="none"/></svg>
<div class="search abs"></div>
<svg class="i" style="left:57.5px;top:10.0px" width="20" height="20" viewBox="0 0 20 20"><circle cx="12.300" cy="7.200" r="5.300" stroke="#111" stroke-width="1.300"/><path d="M8.500 11l-6.300 6.400" stroke="#111" stroke-width="1.400"/></svg>
<div class="tx" style="left:88px;top:11px;font-size:14.500px;line-height:20px;color:#2a2a2a;letter-spacing:0">Введите здесь текст для поиска</div>
<svg class="i" style="left:406.0px;top:10.0px" width="20" height="20" viewBox="0 0 20 20"><circle cx="10" cy="10" r="6.900" stroke="#0a0a0a" stroke-width="2"/></svg>
<svg class="i" style="left:453.8px;top:10.0px" width="20" height="20" viewBox="0 0 20 20"><path d="M3.500 3h10M3.500 17h10" stroke="#111" stroke-width="1.300" stroke-linecap="butt"/><rect x="4.500" y="6" width="8" height="8" stroke="#111" stroke-width="1.300" stroke-linejoin="miter"/><path d="M16.500 3v2.500M16.500 10.500v6.500" stroke="#111" stroke-width="1.300" stroke-linecap="butt"/><rect x="15.300" y="6.300" width="2.600" height="2.600" fill="#111" stroke="none"/></svg>
<div style="position:absolute;left:491px;top:1px;width:48px;height:39px;background:rgba(255,255,255,.55)"></div>
<div style="position:absolute;left:491px;top:38px;width:48px;height:2px;background:#0a74d4"></div>
<svg class="i" style="left:503.0px;top:7.6px" width="24" height="24" viewBox="0 0 24 24"><defs><linearGradient id="eg1" x1="0" y1="0" x2="0" y2="1"><stop offset="0" stop-color="#1f9de6"/><stop offset="1" stop-color="#0f6bc9"/></linearGradient><linearGradient id="eg2" x1="0" y1="0" x2="1" y2=".35"><stop offset="0" stop-color="#28aef0"/><stop offset=".5" stop-color="#33c6cf"/><stop offset="1" stop-color="#66e24a"/></linearGradient></defs>
<path d="M0 12C0 5.400 5.400 0 12 0c6.600 0 12 4.800 12 10.500 0 2.500-1 4.500-2.500 5.800l.8 1.900C20.500 22 17 24 13 24 5.500 24 0 18.600 0 12z" fill="url(#eg1)" stroke="none"/>
<path d="M8.900 8.500C7.500 10 7 12 7 14.300c0 4.700 3.500 8.700 8 9 3.500 0 6-2.300 7.300-5.100-1.800 1.300-4.300 1.800-6.800 1-3-1-5.300-3.200-6.300-5.700-.5-1.500-.5-3.500-.3-5z" fill="#0f4c9c" stroke="none"/>
<path d="M8.800 12.400c0-1.700 1.300-2.900 2.900-2.900 1.600 0 2.900 1.100 2.900 2.300 0 1.700-1.400 2.200-1.300 2.800.2.700 2.200 1.500 4.700 1.500 1.500 0 3-.4 4-1.100l.3 3.200c-1.800 1.300-4.300 1.800-6.800 1-4-1.200-6.700-3.600-6.700-6.800z" fill="#f6f3f1" stroke="none"/>
<path d="M.300 10C1.500 4 6.500 0 12 0c7 0 12 5 12 10.500 0 3.500-3 5.600-6 5.600-2.500 0-4.500-.8-4.700-1.500-.1-.6 1.300-1.100 1.300-2.800 0-3-2.600-5.500-6.100-5.500-4 0-7 1.700-8.200 3.700z" fill="url(#eg2)" stroke="none"/></svg>
<div style="position:absolute;left:544px;top:38px;width:32.500px;height:2px;background:#0a74d4"></div><div style="position:absolute;left:576.500px;top:38px;width:7.500px;height:2px;background:#6aa9e6"></div>
<svg class="i" style="left:551.9px;top:7.5px" width="24" height="24" viewBox="0 0 24 24"><path d="M1.500 4.200a1 1 0 0 1 1-1h6.300l1.700 1.800H1.500z" fill="#e8a317" stroke="none"/><rect x="1.500" y="4.800" width="21" height="15.500" rx=".8" fill="#fcd462" stroke="none"/><path d="M1.500 9.500h21v10a.8.800 0 0 1-.8.800H2.300a.8.800 0 0 1-.8-.8z" fill="#fbc843" stroke="none"/><path d="M5.500 20.300v-6.600a.7.700 0 0 1 .7-.7h11.600a.7.700 0 0 1 .7.700v6.600h-3.300v-3.800H8.800v3.800z" fill="#2c8fe0" stroke="none"/></svg>
<svg class="i" style="left:601.0px;top:7.5px" width="24" height="24" viewBox="0 0 24 24"><path d="M12 1.200L23.500 8v12.500a.8.800 0 0 1-.8.800H1.300a.8.800 0 0 1-.8-.8V8z" fill="#0f6cbd" stroke="none"/><path d="M3 8.500h18v8H3z" fill="#fff" stroke="none"/><path d="M.500 9.300L12 16l11.500-6.700v11.200a.8.800 0 0 1-.8.800H1.300a.8.800 0 0 1-.8-.8z" fill="#28a8ea" stroke="none"/><path d="M.700 21L12 14.500 23.300 21z" fill="#1490df" stroke="none"/><path d="M12 1.200L23.500 8 21 9.500 12 4.200 3 9.500.500 8z" fill="#0a59a4" stroke="none"/></svg>
<svg class="i" style="left:649.6px;top:7.7px" width="24" height="24" viewBox="0 0 24 24"><circle cx="12" cy="12.600" r="11" fill="rgba(0,0,0,.12)" stroke="none"/><circle cx="12" cy="12" r="10.900" fill="#fafafa" stroke="none"/><path d="M6.300 6.300L12 13.200l5.700-6.900M12 13.200v6.300" stroke="#e3222a" stroke-width="2.400" stroke-linecap="round"/></svg>
<div style="position:absolute;left:699.200px;top:8.300px;width:23.300px;height:23px;background:#1c3f7c;border-radius:2.500px"></div>
<div class="tx" style="left:703px;top:9.500px;font-size:17px;line-height:20px;color:#fff;font-weight:bold">B<span style="color:#1fb6ec">.</span></div>
<svg class="i" style="left:747.9px;top:7.3px" width="24" height="24" viewBox="0 0 24 24"><path d="M6.200 1.500l5.800 3.700-5.800 3.700L.400 5.200zM17.800 1.500l5.800 3.700-5.800 3.700L12 5.200zM.400 12.600l5.800-3.700 5.800 3.700-5.800 3.700zM17.800 8.900l5.800 3.700-5.800 3.700-5.800-3.700zM6.200 17.600l5.800-3.700 5.800 3.700-5.800 3.700z" fill="#0a0a0a" stroke="none"/></svg>
<div style="position:absolute;left:789px;top:38px;width:40px;height:2px;background:#0a74d4"></div>
<svg class="i" style="left:796.9px;top:7.7px" width="24" height="24" viewBox="0 0 24 24"><circle cx="12" cy="12" r="11" fill="#fff" stroke="none"/><path d="M12 1a11 11 0 0 1 9.530 5.500H12a5.500 5.500 0 0 0-4.760 2.750L2.470 6.500A11 11 0 0 1 12 1z" fill="#e33b2e"/><path d="M2.470 6.500l4.770 8.250A5.500 5.500 0 0 0 12 17.500l-2.380 5.240A11 11 0 0 1 2.470 6.500z" fill="#2da94f"/><path d="M21.530 6.500A11 11 0 0 1 9.620 22.740L14.500 14.800A5.500 5.500 0 0 0 16.760 9.250 5.500 5.500 0 0 0 12 6.500z" fill="#fcc934"/><path d="M21.530 6.500H12a5.500 5.500 0 0 1 4.760 8.250L12 23a11 11 0 0 0 9.530-16.500z" fill="#fbc21a"/><circle cx="12" cy="12" r="5.200" fill="#fff" stroke="none"/><circle cx="12" cy="12" r="4.200" fill="#4a8af4" stroke="none"/></svg>
<div style="position:absolute;left:838px;top:38px;width:32px;height:2px;background:#0a74d4"></div><div style="position:absolute;left:870px;top:38px;width:7.500px;height:2px;background:#6aa9e6"></div>
<svg class="i" style="left:846.3px;top:7.5px" width="24" height="24" viewBox="0 0 24 24"><rect x="6.500" y="1.500" width="17" height="21" rx="1" fill="#2b7cd3" stroke="none"/><rect x="6.500" y="1.500" width="17" height="5.300" fill="#41a5ee" stroke="none"/><rect x="6.500" y="6.800" width="17" height="5.200" fill="#2b7cd3" stroke="none"/><rect x="6.500" y="12" width="17" height="5.200" fill="#185abd" stroke="none"/><path d="M6.500 17.200h17v4.300a1 1 0 0 1-1 1h-15a1 1 0 0 1-1-1z" fill="#103f91" stroke="none"/><rect x=".500" y="5.500" width="13" height="13" rx="1" fill="#185abd" stroke="none"/><path d="M3.200 8.500l1.600 7 2.200-6.500 2.200 6.500 1.600-7" stroke="#fff" stroke-width="1.500" stroke-linejoin="miter" stroke-linecap="butt"/></svg>
<svg class="i" style="left:1069.0px;top:10.0px" width="20" height="20" viewBox="0 0 20 20"><path d="M4 12.800l6-6 6 6" stroke="#111" stroke-width="1.300" stroke-linecap="butt" stroke-linejoin="miter"/></svg>
<svg class="i" style="left:1093.0px;top:10.0px" width="20" height="20" viewBox="0 0 20 20"><rect x="5.500" y="6.500" width="7" height="7" rx="1.200" stroke="#111" stroke-width="1.200"/><path d="M12.500 9.200l3-1.700v5l-3-1.700" stroke="#111" stroke-width="1.100"/><path d="M5.500 4.500c0-1.500 1-2 2-2h3c1 0 2 .5 2 2M5.500 15.500c0 1.500 1 2 2 2h3c1 0 2-.5 2-2" stroke="#111" stroke-width="1"/></svg>
<svg class="i" style="left:1116.8px;top:10.0px" width="20" height="20" viewBox="0 0 20 20"><path d="M5.500 14.500a3.200 3.200 0 0 1-.4-6.300 4.600 4.600 0 0 1 8.500-1.300 3.900 3.900 0 0 1 2.300 7.600z" fill="#a9a9a9" stroke="#2a2a2a" stroke-width="1.100"/></svg>
<svg class="i" style="left:1141.4px;top:10.0px" width="20" height="20" viewBox="0 0 20 20"><rect x="2.500" y="5.500" width="13.500" height="9" stroke="#111" stroke-width="1.100" stroke-linejoin="miter"/><rect x="4.300" y="7.300" width="6.500" height="5.400" fill="#111" stroke="none"/><rect x="16.300" y="8" width="1.600" height="4" fill="#111" stroke="none"/></svg>
<svg class="i" style="left:1167.0px;top:10.0px" width="20" height="20" viewBox="0 0 20 20"><path d="M3 16.500A13.500 13.500 0 0 1 16.500 3" stroke="#111" stroke-width="1.200"/><path d="M6.700 16.500a9.800 9.800 0 0 1 9.800-9.800" stroke="#111" stroke-width="1.200"/><path d="M10.400 16.500a6.100 6.100 0 0 1 6.100-6.100" stroke="#111" stroke-width="1.200"/><circle cx="15.300" cy="15.300" r="1.500" fill="#111" stroke="none"/></svg>
<svg class="i" style="left:1188.9px;top:10.0px" width="20" height="20" viewBox="0 0 20 20"><path d="M2.500 7.800h2.700l3.800-3.500v11.400l-3.800-3.500H2.500z" stroke="#111" stroke-width="1.100" stroke-linejoin="miter"/><path d="M11.300 7.500a3.500 3.500 0 0 1 0 5M13.500 5.500a6.300 6.300 0 0 1 0 9M15.800 3.600a9 9 0 0 1 0 12.800" stroke="#111" stroke-width="1.100"/></svg>
<div class="tx" style="left:1218.300px;top:12.300px;font-size:12.500px;line-height:16px;color:#111;letter-spacing:-.5px">ҚАЗ</div>
<div class="tx" style="left:1250px;top:2.500px;width:59px;text-align:center;font-size:12px;line-height:16px;color:#111;letter-spacing:-.3px">11:57</div>
<div class="tx" style="left:1250px;top:20.500px;width:59px;text-align:center;font-size:12px;line-height:16px;color:#111;letter-spacing:-.45px">23.02.2021</div>
<svg class="i" style="left:1323.0px;top:9.3px" width="20" height="20" viewBox="0 0 20 20"><path d="M2.200 3.500h15.600v11.500H10.500L6.200 19v-4H2.200z" fill="#0a0a0a" stroke="none"/><path d="M5 6.700h10M5 9.300h10M5 11.900h10" stroke="#e8ddd5" stroke-width="1.100" stroke-linecap="butt"/></svg>
<div style="position:absolute;left:1331.800px;top:18.800px;width:16.400px;height:16.400px;border-radius:50%;background:#cfcfcf;border:1px solid #555"></div><div class="tx" style="left:1331.800px;top:19.500px;width:16.400px;text-align:center;font-size:11.500px;line-height:15px;color:#111">3</div>
</div>

</div>
</body>
</html>
